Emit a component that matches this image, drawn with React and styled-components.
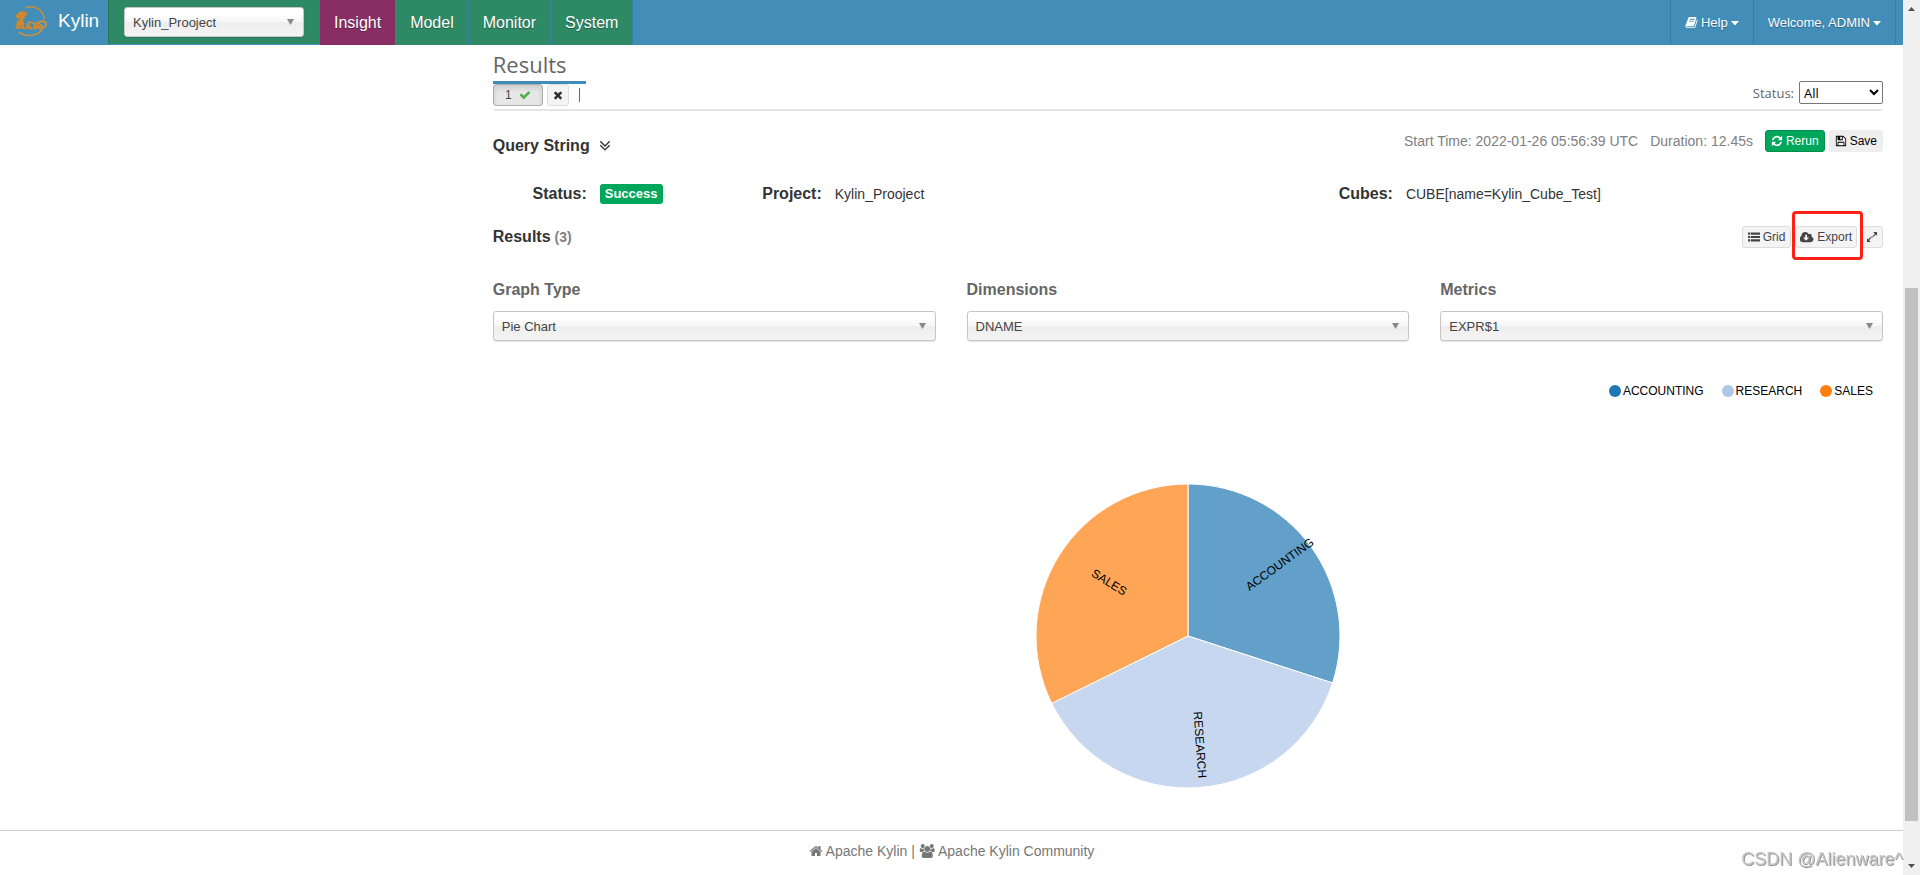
import React from "react";
import styled, { createGlobalStyle } from "styled-components";

const GlobalStyle = createGlobalStyle`
  *, *::before, *::after { box-sizing: border-box; }
  body {
    margin: 0;
    background: #fff;
    color: #333;
    font: 14px/20px "Liberation Sans", Arial, sans-serif;
  }
  h2, h3, dl, dd, dt, p, ul { margin: 0; padding: 0; }
  a { color: inherit; text-decoration: none; }
  button, select { font-family: inherit; }
`;

const Page = styled.div`
  display: flex;
  min-height: 100vh;
`;

const Main = styled.div`
  flex: 1;
  min-width: 0;
  display: flex;
  flex-direction: column;
`;

/* ---------- scrollbar ---------- */
const ScrollTrack = styled.aside`
  flex: none;
  width: 17px;
  background: #f0f0f0;
  display: flex;
  flex-direction: column;
  align-items: center;
  padding: 5px 0;
`;
const ScrollArrow = styled.svg`
  flex: none;
  width: 9px;
  height: 9px;
  fill: #505050;
`;
const ScrollSpace = styled.div`
  flex: ${(p) => p.$grow} 1 0;
`;
const ScrollThumb = styled.div`
  flex: 533 1 0;
  width: 13px;
  background: #c1c1c1;
`;

/* ---------- header ---------- */
const Header = styled.header`
  display: flex;
  height: 45px;
  background: #438eb9;
  color: #fff;
  text-shadow: 0 1px 1px rgba(0, 0, 0, 0.35);
`;
const Brand = styled.a`
  display: flex;
  align-items: center;
  gap: 10px;
  width: 108px;
  padding: 0 0 3px 12px;
  font-size: 19px;
  text-shadow: none;
`;
const ProjectPicker = styled.div`
  background: #2e8965;
  border-left: 1px solid #2b7558;
  border-bottom: 1px solid #438eb9;
  padding: 7px 16px 0 15px;
`;
const Nav = styled.nav`
  flex: 1;
  display: flex;
`;
const NavLink = styled.a`
  padding: 0 14px;
  border-right: 1px solid #367fa9;
  line-height: 45px;
  font-size: 16px;
  background: ${(p) => (p.$active ? "#892e65" : "#2e8965")};
`;
const UserMenu = styled.div`
  display: flex;
  margin-right: 7px;
  border-left: 1px solid #367fa9;
`;
const MenuLink = styled.a`
  display: flex;
  align-items: center;
  gap: 3px;
  padding: 0 14px;
  border-right: 1px solid #367fa9;
  font-size: 13px;
`;

/* ---------- chosen-like select ---------- */
const SelectBox = styled.div`
  position: relative;
  width: ${(p) => p.$width || "100%"};
`;
const SelectInput = styled.select`
  display: block;
  width: 100%;
  height: 30px;
  padding: 0 24px 0 8px;
  appearance: none;
  border: 1px solid #c6c6c6;
  border-radius: 3px;
  background: linear-gradient(#fff 20%, #f6f6f6 50%, #eee 52%, #f4f4f4 100%);
  box-shadow: 0 1px 1px rgba(0, 0, 0, 0.1);
  color: #444;
  font-size: 13px;
`;
const SelectArrow = styled.svg`
  position: absolute;
  top: 12px;
  right: 10px;
  width: 7px;
  height: 6px;
  fill: #888;
  pointer-events: none;
`;

/* ---------- content ---------- */
const Columns = styled.div`
  flex: 1;
  display: grid;
  grid-template-columns: 1fr 3fr;
`;
const Content = styled.main`
  grid-column: 2;
  padding: 5px 20px 0 17px;
`;
const Row = styled.div`
  display: flex;
  align-items: center;
  justify-content: space-between;
`;
const PageTitle = styled.h2`
  width: 93px;
  height: 34px;
  border-bottom: 3px solid #3c8dbc;
  color: #666;
  font: 400 22px/28px "Open Sans", sans-serif;
`;
const QueryTabs = styled.div`
  display: flex;
  align-items: flex-end;
  justify-content: space-between;
  height: 27px;
  padding-bottom: 3px;
  border-bottom: 2px solid #e5e5e5;
  border-radius: 3px;
`;
const Group = styled.div`
  display: flex;
  align-items: center;
  gap: ${(p) => p.$gap}px;
`;
const Button = styled.button`
  display: inline-flex;
  align-items: center;
  justify-content: center;
  gap: 3px;
  height: 22px;
  padding: 0 ${(p) => p.$pad ?? 4}px;
  border: 1px solid #ddd;
  border-radius: 3px;
  background: #f4f4f4;
  color: #444;
  font-size: 12px;
`;
const TabButton = styled(Button)`
  width: 50px;
  gap: 7px;
  border-color: #adadad;
  background: #e7e7e7;
  box-shadow: inset 0 3px 5px rgba(0, 0, 0, 0.125);
`;
const SuccessButton = styled(Button)`
  border-color: #008d4c;
  background: #00a65a;
  color: #fff;
`;
const PlainButton = styled(Button)`
  border-color: #eee;
  background: #eee;
  color: #000;
`;
const Divider = styled.span`
  width: 1px;
  height: 14px;
  margin-left: 6px;
  background: #666;
`;
const StatusFilter = styled.label`
  display: flex;
  align-items: center;
  gap: 5px;
  padding-bottom: 2px;
  color: #666;
  font: 13px/20px "Open Sans", sans-serif;
`;
const StatusSelect = styled.select`
  width: 84px;
  height: 23px;
  padding: 0;
  border: 1px solid #767676;
  border-radius: 2px;
  background: #fff;
  color: #000;
  font-size: 13px;
`;
const SectionTitle = styled.h3`
  display: flex;
  align-items: center;
  gap: ${(p) => p.$gap || 4}px;
  font-size: 16px;
  line-height: 20px;
  font-weight: 700;
  color: #333;
`;
const Count = styled.span`
  color: #808080;
  font-size: 14px;
`;
const QueryRow = styled(Row)`
  margin-top: 19px;
  align-items: flex-start;
`;
const QueryTitle = styled(SectionTitle)`
  margin-top: 6px;
`;
const Timing = styled.span`
  color: #808080;
  white-space: nowrap;
`;
const Details = styled.dl`
  display: grid;
  grid-template-columns: 235fr 571fr 584fr;
  margin-top: 26px;
`;
const Detail = styled.div`
  display: flex;
  align-items: center;
  gap: 13px;
  height: 24px;
  dt {
    width: 94px;
    text-align: right;
    font-weight: 700;
    font-size: 16px;
  }
`;
const Badge = styled.span`
  display: block;
  padding: 0 5px;
  border-radius: 3px;
  background: #00a65a;
  color: #fff;
  font-size: 13px;
  line-height: 20px;
  font-weight: 700;
`;
const ResultRow = styled(Row)`
  margin-top: 20px;
`;
const Highlight = styled.span`
  position: relative;
  display: flex;
  &::after {
    content: "";
    position: absolute;
    inset: -15px -6px -12px -3px;
    border: 3px solid #ff2116;
    border-radius: 4px;
    pointer-events: none;
  }
`;
const Filters = styled.div`
  display: grid;
  grid-template-columns: repeat(3, 1fr);
  gap: 31px;
  margin-top: 32px;
`;
const Field = styled.div`
  display: grid;
  gap: 11px;
  label {
    color: #666;
    font-size: 16px;
    font-weight: 700;
  }
`;
const Legend = styled.ul`
  display: flex;
  justify-content: flex-end;
  gap: 18px;
  margin: 40px 10px 0 0;
  list-style: none;
  color: #000;
  font-size: 12px;
`;
const LegendItem = styled.li`
  display: flex;
  align-items: center;
  gap: 2px;
  &::before {
    content: "";
    width: 12px;
    height: 12px;
    border-radius: 50%;
    background: ${(p) => p.$color};
  }
`;
const Pie = styled.svg`
  display: block;
  width: 306px;
  height: 306px;
  margin: 82px auto 41px;
  overflow: visible;
  font-size: 12px;
`;
const Footer = styled.footer`
  display: flex;
  align-items: flex-start;
  justify-content: center;
  gap: 4px;
  height: 45px;
  padding-top: 10px;
  border-top: 1px solid #d2d2d2;
  color: #777;
  a { display: flex; align-items: center; gap: 3px; }
`;
const Watermark = styled.div`
  position: fixed;
  right: 17px;
  bottom: 6px;
  color: #c4c4c4;
  font-size: 18px;
  text-shadow: 1px 1px 0 #999;
`;
const Glyph = styled.svg`
  flex: none;
  fill: currentColor;
`;

const ICONS = {
  home: [1792, "M1472 992v480q0 26-19 45t-45 19h-384v-384h-256v384h-384q-26 0-45-19t-19-45v-480q0-1 .5-3t.5-3l575-474 575 474q1 2 1 6zm223-69l-62 74q-8 9-21 11h-3q-13 0-21-7l-692-577-692 577q-12 8-24 7-13-2-21-11l-62-74q-8-10-7-23.5t11-21.5l719-599q32-26 76-26t76 26l244 204v-195q0-14 9-23t23-9h192q14 0 23 9t9 23v408l219 182q10 8 11 21.5t-7 23.5z"],
  check: [1792, "M1671 566q0 40-28 68l-724 724-136 136q-28 28-68 28t-68-28l-136-136-362-362q-28-28-28-68t28-68l136-136q28-28 68-28t68 28l294 295 656-657q28-28 68-28t68 28l136 136q28 28 28 68z"],
  times: [1792, "M1490 1322q0 40-28 68l-136 136q-28 28-68 28t-68-28l-294-294-294 294q-28 28-68 28t-68-28l-136-136q-28-28-28-68t28-68l294-294-294-294q-28-28-28-68t28-68l136-136q28-28 68-28t68 28l294 294 294-294q28-28 68-28t68 28l136 136q28 28 28 68t-28 68l-294 294 294 294q28 28 28 68z"],
  refresh: [1792, "M1639 1056q0 5-1 7-64 268-268 434.5t-478 166.5q-146 0-282.5-55t-243.5-157l-129 129q-19 19-45 19t-45-19-19-45v-448q0-26 19-45t45-19h448q26 0 45 19t19 45-19 45l-137 137q71 66 161 102t187 36q134 0 250-65t186-179q11-17 53-117 8-23 30-23h192q13 0 22.5 9.5t9.5 22.5zm25-800v448q0 26-19 45t-45 19h-448q-26 0-45-19t-19-45 19-45l138-138q-148-137-349-137-134 0-250 65t-186 179q-11 17-53 117-8 23-30 23h-199q-13 0-22.5-9.5t-9.5-22.5v-7q65-268 270-434.5t480-166.5q146 0 284 55.5t245 156.5l130-129q19-19 45-19t45 19 19 45z"],
  save: [1792, "M512 1536h768v-384h-768v384zm896 0h128v-896q0-14-10-38.5t-20-34.5l-281-281q-10-10-34-20t-39-10v416q0 40-28 68t-68 28h-576q-40 0-68-28t-28-68v-416h-128v1280h128v-416q0-40 28-68t68-28h832q40 0 68 28t28 68v416zm-384-928v-320q0-13-9.5-22.5t-22.5-9.5h-192q-13 0-22.5 9.5t-9.5 22.5v320q0 13 9.5 22.5t22.5 9.5h192q13 0 22.5-9.5t9.5-22.5zm640 32v928q0 40-28 68t-68 28h-1344q-40 0-68-28t-28-68v-1344q0-40 28-68t68-28h928q40 0 88 20t76 48l280 280q28 28 48 76t20 88z"],
  book: [1792, "M1703 478q40 57 18 129l-275 906q-19 64-76.5 107.5t-122.5 43.5h-923q-77 0-148.5-53.5t-99.5-131.5q-24-67-2-127 0-4 3-27t4-37q1-8-3-21.5t-3-19.5q2-11 8-21t16.5-23.5 16.5-23.5q23-38 45-91.5t30-91.5q3-10 .5-30t-.5-28q3-11 17-28t17-23q21-36 42-92t25-90q1-9-2.5-32t.5-28q4-13 22-30.5t22-22.5q19-26 42.5-84.5t27.5-96.5q1-8-3-25.5t-2-26.5q2-8 9-18t18-23 17-21q8-12 16.5-30.5t15-35 16-36 19.5-32 26.5-23.5 36-11.5 47.5 5.5l-1 3q38-9 51-9h761q74 0 114 56t18 130l-274 906q-36 119-71.5 153.5t-128.5 34.5h-869q-27 0-38 15-11 16-1 43 24 70 144 70h923q29 0 56-15.5t35-41.5l300-987q7-22 5-57 38 15 59 43zm-1064 2q-4 13 2 22.5t20 9.5h608q13 0 25.5-9.5t16.5-22.5l21-64q4-13-2-22.5t-20-9.5h-608q-13 0-25.5 9.5t-16.5 22.5zm-83 256q-4 13 2 22.5t20 9.5h608q13 0 25.5-9.5t16.5-22.5l21-64q4-13-2-22.5t-20-9.5h-608q-13 0-25.5 9.5t-16.5 22.5z"],
  list: [1792, "M0 240h320v320h-320zM420 240h1372v320h-1372zM0 736h320v320h-320zM420 736h1372v320h-1372zM0 1232h320v320h-320zM420 1232h1372v320h-1372z"],
  cloud: [1920, "M1216 928q0-14-9-23t-23-9h-224v-352q0-13-9.5-22.5t-22.5-9.5h-192q-13 0-22.5 9.5t-9.5 22.5v352h-224q-13 0-22.5 9.5t-9.5 22.5q0 14 9 23l352 352q9 9 23 9t23-9l351-351q10-12 10-24zm640 224q0 159-112.5 271.5t-271.5 112.5h-1088q-185 0-316.5-131.5t-131.5-316.5q0-130 70-240t188-165q-2-30-2-43 0-212 150-362t362-150q156 0 285.5 87t188.5 231q71-62 166-62 106 0 181 75t75 181q0 76-41 138 130 31 213.5 135.5t83.5 238.5z"],
  doubleDown: [1792, "M1395 864q0 13-10 23l-466 466q-10 10-23 10t-23-10l-466-466q-10-10-10-23t10-23l50-50q10-10 23-10t23 10l393 393 393-393q10-10 23-10t23 10l50 50q10 10 10 23zm0-384q0 13-10 23l-466 466q-10 10-23 10t-23-10l-466-466q-10-10-10-23t10-23l50-50q10-10 23-10t23 10l393 393 393-393q10-10 23-10t23 10l50 50q10 10 10 23z"],
  users: [1984, "M657 896q-162 5-265 128h-134q-82 0-138-40.5t-62-118.5q0-353 124-353 6 0 43.5 21t97.5 42.5 119 21.5q67 0 133-23-5 37-5 66 0 139 81 256zm1071 637q0 120-73 189.5t-194 69.5h-874q-121 0-194-69.5t-73-189.5q0-53 3.5-103.5t14-109 26.5-108.5 43-97.5 62-81 85.5-53.5 111.5-20q10 0 43 21.5t73 48 107 48 135 21.5 135-21.5 107-48 73-48 43-21.5q61 0 111.5 20t85.5 53.5 62 81 43 97.5 26.5 108.5 14 109 3.5 103.5zm-1024-1277q0 106-75 181t-181 75-181-75-75-181 75-181 181-75 181 75 75 181zm704 384q0 159-112.5 271.5t-271.5 112.5-271.5-112.5-112.5-271.5 112.5-271.5 271.5-112.5 271.5 112.5 112.5 271.5zm576 225q0 78-62 118.5t-138 40.5h-134q-103-123-265-128 81-117 81-256 0-29-5-66 66 23 133 23 59 0 119-21.5t97.5-42.5 43.5-21q124 0 124 353zm-128-609q0 106-75 181t-181 75-181-75-75-181 75-181 181-75 181 75 75 181z"],
  expand: [1792, "M1080 150h562v562l-180-180-330 330-130-130 330-330zM712 1642h-562v-562l180 180 330-330 130 130-330 330zM900 760l130 130-140 140-130-130z"],
  caret: [1024, "M0 640h1024l-512 560z"],
};

function Icon({ name, size = 13, color }) {
  const [w, d] = ICONS[name];
  return (
    <Glyph viewBox={`0 0 ${w} 1792`} height={size} width={Math.round((size * w) / 1792)} color={color} aria-hidden="true">
      <path d={d} />
    </Glyph>
  );
}

function Logo() {
  return (
    <svg width="36" height="34" viewBox="0 0 36 34" aria-hidden="true">
      <g fill="none" stroke="#c98f3c" strokeLinecap="round">
        <path d="M14 3.500C23 .5 31 6 32.300 14.500M31 24.500C26 31.500 16 34 7 28.500" strokeWidth="1.500" />
        <path d="M15.500 21.500c0-4 4.500-4.500 6.500-1.500s4.500 2 4.500 0-2-2-2.500-1M26.500 20c1-4 7.500-3.500 7.500.500 0 3-4.500 3.500-5 .5" strokeWidth="1.800" />
      </g>
      <g fill="#d1882a">
        <path d="M3 11l3-1 1-3 2 1.500 2-2.500.5 2.500 4-1.500-1.500 3 1.500 1-3 1 1 2.500-2.500-.5-1 2-3 .5 1-2.500-3 .5z" />
        <path d="M8 13.500h4l-1 2.500 1.500 4-1 2 2.500 3h-4l-1-2-1.500 2H3.500v-1.500l2-1.500-2-1 2-3.500-1-2 3.500 1z" />
        <path d="M15 20.500l3.500 0 0 2 2 1.500v1.500h-3.500l-1-1.500-1 1.500h-1.500zM22 20.500l5 .5 3 3v1.500h-3l-2-2-1 2h-3z" />
      </g>
    </svg>
  );
}

function ChosenSelect({ id, label, value, width }) {
  return (
    <SelectBox $width={width}>
      <SelectInput id={id} aria-label={label} defaultValue={value}>
        <option>{value}</option>
      </SelectInput>
      <SelectArrow viewBox="0 0 7 6" aria-hidden="true">
        <path d="M0 0h7L3.500 6z" />
      </SelectArrow>
    </SelectBox>
  );
}

const FILTERS = [
  { id: "graph-type", label: "Graph Type", value: "Pie Chart" },
  { id: "dimensions", label: "Dimensions", value: "DNAME" },
  { id: "metrics", label: "Metrics", value: "EXPR$1" },
];

const SLICES = [
  { name: "ACCOUNTING", from: 0, to: 108, color: "#1f77b4", fill: "#62a0ca" },
  { name: "RESEARCH", from: 108, to: 243.7, color: "#aec7e8", fill: "#c6d7ef" },
  { name: "SALES", from: 243.7, to: 360, color: "#ff7f0e", fill: "#ffa556" },
];

const RADIUS = 152;
const polar = (deg, r) => {
  const a = ((deg - 90) * Math.PI) / 180;
  return [r * Math.cos(a), r * Math.sin(a)];
};

function PieChart() {
  return (
    <Pie viewBox="-153 -153 306 306" role="img" aria-label="Pie chart">
      {SLICES.map(({ name, from, to, fill }) => (
        <path
          key={name}
          d={`M0 0L${polar(from, RADIUS)}A${RADIUS} ${RADIUS} 0 0 1 ${polar(to, RADIUS)}Z`}
          fill={fill}
          stroke="#fff"
        />
      ))}
      {SLICES.map(({ name, from, to }) => {
        const mid = (from + to) / 2;
        const left = mid > 180;
        return (
          <text
            key={name}
            transform={`translate(${polar(mid, RADIUS / 2)}) rotate(${left ? mid - 270 : mid - 90})`}
            textAnchor={left ? "end" : "start"}
          >
            {name}
          </text>
        );
      })}
    </Pie>
  );
}

export default function App() {
  return (
    <>
      <GlobalStyle />
      <Page>
        <Main>
          <Header>
            <Brand href="#">
              <Logo />
              Kylin
            </Brand>
            <ProjectPicker>
              <ChosenSelect label="Project" value="Kylin_Prooject" width="180px" />
            </ProjectPicker>
            <Nav>
              <NavLink href="#insight" $active>Insight</NavLink>
              <NavLink href="#model">Model</NavLink>
              <NavLink href="#monitor">Monitor</NavLink>
              <NavLink href="#system">System</NavLink>
            </Nav>
            <UserMenu>
              <MenuLink href="#help">
                <Icon name="book" />
                Help
                <Icon name="caret" size={14} />
              </MenuLink>
              <MenuLink href="#user">
                Welcome, ADMIN
                <Icon name="caret" size={14} />
              </MenuLink>
            </UserMenu>
          </Header>

          <Columns>
            <Content>
              <PageTitle>Results</PageTitle>
              <QueryTabs>
                <Group $gap={4}>
                  <TabButton type="button">
                    1 <Icon name="check" size={12} color="#4cae4c" />
                  </TabButton>
                  <Button type="button" aria-label="Close" $pad={4}>
                    <Icon name="times" size={12} color="#333" />
                  </Button>
                  <Divider />
                </Group>
                <StatusFilter>
                  Status:
                  <StatusSelect defaultValue="All">
                    <option>All</option>
                  </StatusSelect>
                </StatusFilter>
              </QueryTabs>

              <QueryRow>
                <QueryTitle $gap={6}>
                  Query String <Icon name="doubleDown" size={18} />
                </QueryTitle>
                <Group $gap={12}>
                  <Timing>Start Time: 2022-01-26 05:56:39 UTC</Timing>
                  <Timing>Duration: 12.45s</Timing>
                  <Group $gap={4}>
                    <SuccessButton type="button" $pad={5}>
                      <Icon name="refresh" size={12} /> Rerun
                    </SuccessButton>
                    <PlainButton type="button" $pad={5}>
                      <Icon name="save" size={12} /> Save
                    </PlainButton>
                  </Group>
                </Group>
              </QueryRow>

              <Details>
                <Detail>
                  <dt>Status:</dt>
                  <dd><Badge>Success</Badge></dd>
                </Detail>
                <Detail>
                  <dt>Project:</dt>
                  <dd>Kylin_Prooject</dd>
                </Detail>
                <Detail>
                  <dt>Cubes:</dt>
                  <dd>CUBE[name=Kylin_Cube_Test]</dd>
                </Detail>
              </Details>

              <ResultRow>
                <SectionTitle>
                  Results <Count>(3)</Count>
                </SectionTitle>
                <Group $gap={4}>
                  <Button type="button" $pad={5}>
                    <Icon name="list" size={12} /> Grid
                  </Button>
                  <Highlight>
                    <Button type="button">
                      <Icon name="cloud" size={13} /> Export
                    </Button>
                  </Highlight>
                  <Button type="button" aria-label="Full screen">
                    <Icon name="expand" size={12} />
                  </Button>
                </Group>
              </ResultRow>

              <Filters>
                {FILTERS.map((f) => (
                  <Field key={f.id}>
                    <label htmlFor={f.id}>{f.label}</label>
                    <ChosenSelect id={f.id} value={f.value} />
                  </Field>
                ))}
              </Filters>

              <Legend>
                {SLICES.map((s) => (
                  <LegendItem key={s.name} $color={s.color}>{s.name}</LegendItem>
                ))}
              </Legend>
              <PieChart />
            </Content>
          </Columns>

          <Footer>
            <a href="#kylin"><Icon name="home" size={14} /> Apache Kylin</a>
            <span>|</span>
            <a href="#community"><Icon name="users" size={14} /> Apache Kylin Community</a>
          </Footer>
        </Main>
        <ScrollTrack aria-hidden="true">
          <ScrollArrow viewBox="0 0 9 9"><path d="M1 6h7L4.500 2z" /></ScrollArrow>
          <ScrollSpace $grow={274} />
          <ScrollThumb />
          <ScrollSpace $grow={40} />
          <ScrollArrow viewBox="0 0 9 9"><path d="M1 3h7L4.500 7z" /></ScrollArrow>
        </ScrollTrack>
      </Page>
      <Watermark>CSDN @Alienware^</Watermark>
    </>
  );
}
